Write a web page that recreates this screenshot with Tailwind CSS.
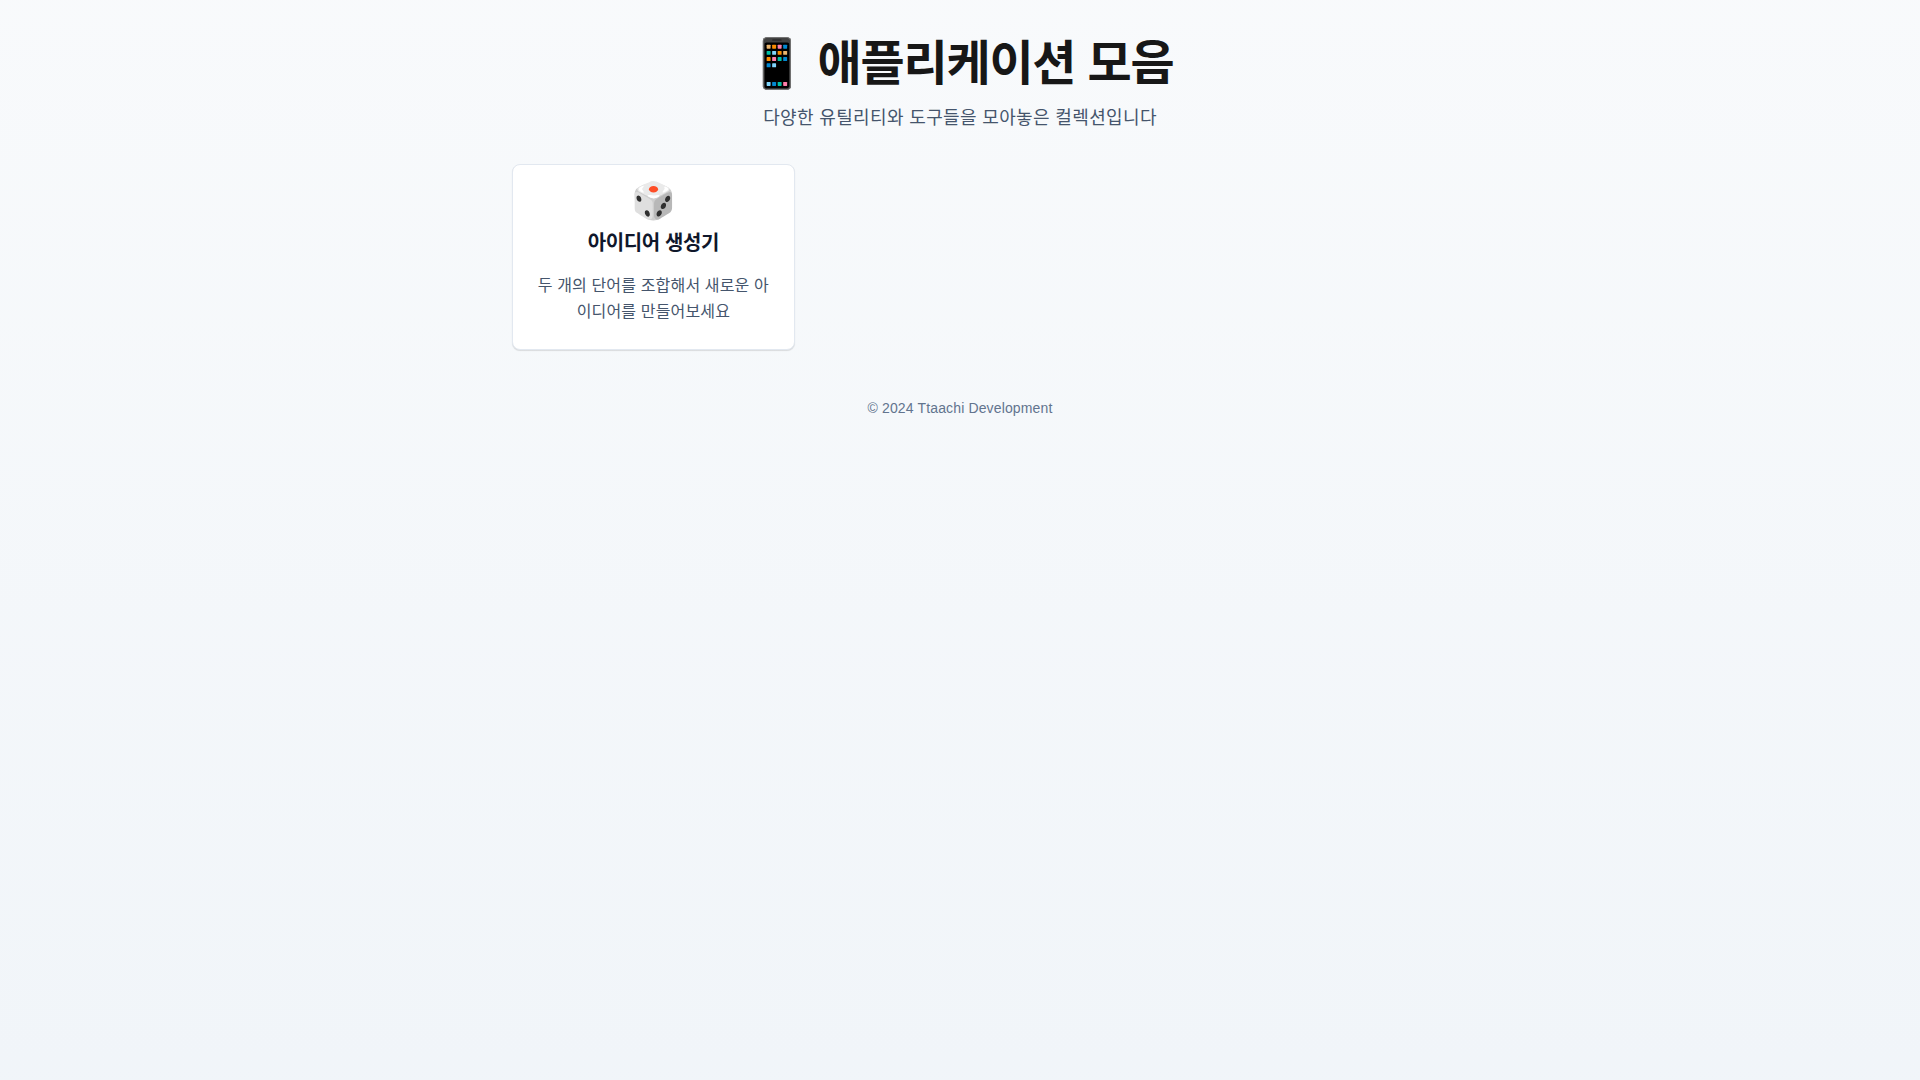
<!DOCTYPE html>
<html lang="ko">
<head>
<meta charset="utf-8">
<meta name="viewport" content="width=device-width, initial-scale=1">
<title>애플리케이션 모음</title>
<script src="https://cdn.jsdelivr.net/npm/@tailwindcss/browser@4"></script>
</head>
<body class="min-h-screen bg-linear-to-b from-slate-50 to-slate-100 tracking-[0.01em] font-['Liberation_Sans','Noto_Sans_CJK_KR',sans-serif]">
<div class="mx-auto max-w-4xl py-8">
  <header class="mb-8 text-center">
    <h1 class="mb-2 text-5xl/16 font-bold tracking-tight text-neutral-900">📱 애플리케이션 모음</h1>
    <p class="text-lg/7 tracking-[0.02em] text-slate-600">다양한 유틸리티와 도구들을 모아놓은 컬렉션입니다</p>
  </header>
  <main class="grid grid-cols-1 gap-6 sm:grid-cols-2 md:grid-cols-3">
    <a href="#" class="block rounded-lg border border-slate-200 bg-white px-6 pt-4 pb-6 text-center shadow-[0_1px_1px_0_rgb(0_0_0/0.12)]">
      <div class="mb-2 text-4xl">🎲</div>
      <h2 class="mb-4 text-xl font-bold tracking-[-0.02em] text-slate-900">아이디어 생성기</h2>
      <p class="text-base/[26px] break-all text-slate-600">두 개의 단어를 조합해서 새로운 아이디어를 만들어보세요</p>
    </a>
  </main>
  <footer class="mt-12 text-center text-sm tracking-[0.01em] text-slate-500">© 2024 Ttaachi Development</footer>
</div>
</body>
</html>
